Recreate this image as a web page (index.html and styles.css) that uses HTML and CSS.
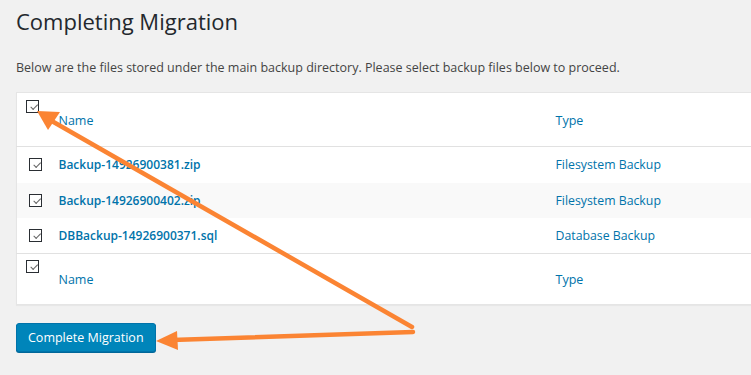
FILE: index.html
```
<!DOCTYPE html>
<html lang="en">
<head>
    <meta charset="UTF-8">
    <meta name="viewport" content="width=device-width, initial-scale=1.0">
    <title>Completing Migration</title>
    <link rel="stylesheet" href="styles.css">
</head>
<body>
    <div class="wrap">
        <h1>Completing Migration</h1>
        <p class="intro">Below are the files stored under the main backup directory. Please select backup files below to proceed.</p>

        <table class="files">
            <thead>
                <tr>
                    <td class="check-col"><span class="cb"></span></td>
                    <th class="name-col"><a href="#">Name</a></th>
                    <th class="type-col"><a href="#">Type</a></th>
                </tr>
            </thead>
            <tbody>
                <tr>
                    <th class="check-row"><span class="cb"></span></th>
                    <td><a class="file" href="#">Backup-14926900381.zip</a></td>
                    <td><a href="#">Filesystem Backup</a></td>
                </tr>
                <tr class="alt">
                    <th class="check-row"><span class="cb"></span></th>
                    <td><a class="file" href="#">Backup-14926900402.zip</a></td>
                    <td><a href="#">Filesystem Backup</a></td>
                </tr>
                <tr>
                    <th class="check-row"><span class="cb"></span></th>
                    <td><a class="file" href="#">DBBackup-14926900371.sql</a></td>
                    <td><a href="#">Database Backup</a></td>
                </tr>
            </tbody>
            <tfoot>
                <tr>
                    <td class="check-col"><span class="cb"></span></td>
                    <th class="name-col"><a href="#">Name</a></th>
                    <th class="type-col"><a href="#">Type</a></th>
                </tr>
            </tfoot>
        </table>

        <button class="button-primary" type="button">Complete Migration</button>
    </div>

    <svg class="arrows" width="751" height="375" viewBox="0 0 751 375">
        <g stroke="#fb8433" stroke-width="4.5" stroke-linecap="round" fill="none">
            <line x1="412" y1="327" x2="50" y2="120"/>
            <line x1="413" y1="332" x2="172" y2="340"/>
        </g>
        <g fill="#fb8433">
            <polygon points="37,111 60,112 48,130"/>
            <polygon points="156,341 177,331 178,350"/>
        </g>
    </svg>
</body>
</html>
```

FILE: styles.css
```
html, body {
    margin: 0;
    padding: 0;
}
body {
    background: #f1f1f1;
    color: #444;
    font-family: "Open Sans", Arial, sans-serif;
    font-size: 13px;
    width: 751px;
    height: 375px;
    overflow: hidden;
    position: relative;
}
.wrap {
    padding: 0 0 0 16px;
}
h1 {
    margin: 0;
    padding: 6px 0 0;
    font-size: 22px;
    font-weight: 400;
    line-height: 30px;
    color: #23282d;
}
.intro {
    margin: 23px 0 0;
    font-size: 12.5px;
    line-height: 18px;
}
a {
    color: #0073aa;
    text-decoration: none;
}
.files {
    margin-top: 15px;
    width: 800px;
    border-collapse: collapse;
    background: #fff;
    border: 1px solid #e5e5e5;
    box-shadow: 0 1px 1px rgba(0, 0, 0, 0.04);
}
.files th, .files td {
    text-align: left;
    font-weight: 400;
    padding: 0;
    vertical-align: middle;
}
.files thead tr {
    height: 54px;
    border-bottom: 1px solid #e1e1e1;
}
.files tfoot tr {
    height: 51px;
    border-top: 1px solid #e1e1e1;
}
.files .check-col {
    width: 42px;
    vertical-align: top;
    padding: 7px 0 0 9px;
    box-sizing: border-box;
}
.files .name-col, .files .type-col {
    padding-top: 2px;
    font-size: 12.5px;
}
.files tfoot .name-col, .files tfoot .type-col {
    padding-top: 1px;
}
.files tfoot .check-col {
    padding-top: 6px;
}
.files .name-col {
    width: 497px;
}
.files tbody tr {
    height: 36px;
}
.files tbody tr.alt {
    height: 35px;
    background: #f9f9f9;
}
.files .check-row {
    padding: 0 0 0 12px;
}
.files tbody td {
    font-size: 12.3px;
}
.file {
    font-weight: 600;
    font-size: 12px;
}
.cb {
    display: block;
    width: 11px;
    height: 11px;
    border: 1px solid #2a2e33;
    position: relative;
    background: #fff;
}
.cb::after {
    content: "";
    position: absolute;
    left: 3px;
    top: 1px;
    width: 6px;
    height: 3px;
    border-left: 1.5px solid #666;
    border-bottom: 1.5px solid #666;
    transform: rotate(-45deg) translate(-1px, 2px);
}
.button-primary {
    margin-top: 18px;
    height: 29px;
    padding: 0 11px;
    background: #0085ba;
    border: 1px solid #0073aa;
    border-radius: 3px;
    box-shadow: 0 1px 0 #006799;
    color: #fff;
    font-family: "Open Sans", Arial, sans-serif;
    font-size: 12.5px;
    cursor: pointer;
}
.arrows {
    position: absolute;
    left: 0;
    top: 0;
    pointer-events: none;
}
```
